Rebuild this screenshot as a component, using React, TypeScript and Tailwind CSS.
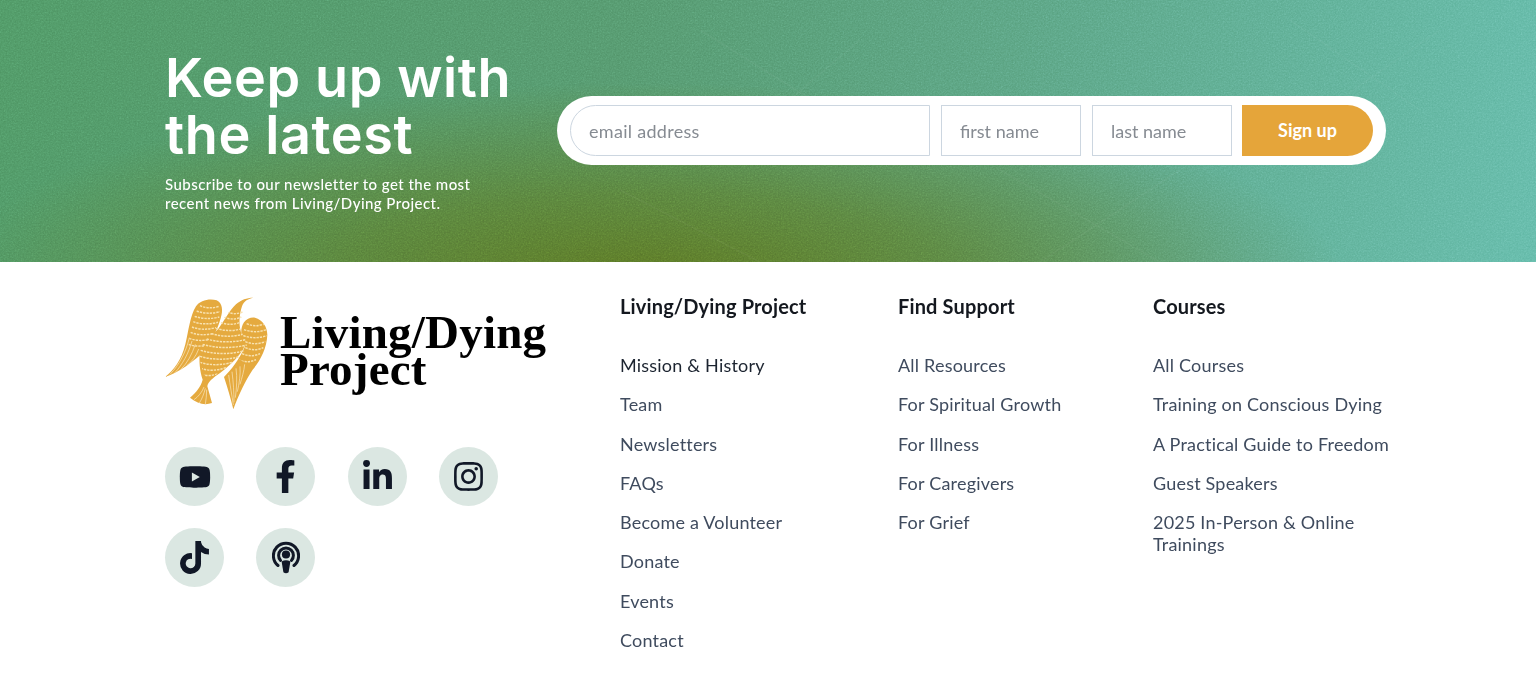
import React from 'react';
import { FaFacebookF, FaInstagram, FaLinkedinIn, FaTiktok, FaYoutube } from 'react-icons/fa';

const columns = [
  {
    title: 'Living/Dying Project',
    width: 'w-[278px]',
    links: ['Mission & History', 'Team', 'Newsletters', 'FAQs', 'Become a Volunteer', 'Donate', 'Events', 'Contact'],
  },
  {
    title: 'Find Support',
    width: 'w-[255px]',
    links: ['All Resources', 'For Spiritual Growth', 'For Illness', 'For Caregivers', 'For Grief'],
  },
  {
    title: 'Courses',
    width: 'w-[250px]',
    links: ['All Courses', 'Training on Conscious Dying', 'A Practical Guide to Freedom', 'Guest Speakers', '2025 In-Person & Online Trainings'],
  },
];

const PodcastIcon = ({ className }: { className?: string }) => (
  <svg viewBox="0 0 28 33" className={className} fill="none" stroke="currentColor" strokeLinecap="round">
    <path d="M6 24.5A12.6 12.6 0 1 1 22 24.5" strokeWidth="3" />
    <path d="M8.6 19.5A7.4 7.4 0 1 1 19.4 19.5" strokeWidth="3" />
    <circle cx="14" cy="13.5" r="4.1" fill="currentColor" stroke="none" />
    <path d="M9.6 20.4Q14 18.2 18.4 20.4L16.6 31.2Q14 33.4 11.4 31.2Z" fill="currentColor" stroke="none" />
  </svg>
);

const socials = [
  { Icon: FaYoutube, size: 'w-[32px] h-[32px]' },
  { Icon: FaFacebookF, size: 'w-[33px] h-[33px]' },
  { Icon: FaLinkedinIn, size: 'w-[33px] h-[33px]' },
  { Icon: FaInstagram, size: 'w-[33px] h-[33px]' },
  { Icon: FaTiktok, size: 'w-[33px] h-[33px]' },
  { Icon: PodcastIcon, size: 'w-[28px] h-[33px]' },
];

const Bird = () => (
  <svg viewBox="45 45 315 345" className="w-[105px] h-[115px] shrink-0">
    <defs>
      <clipPath id="bird-stripes">
        <path d="M118 165L130 90C140 65 165 55 200 58C217 68 218 90 205 140C222 105 250 72 284 58L292 72C276 105 268 130 272 150C280 120 300 110 318 110C345 125 356 150 350 175C344 205 330 235 310 260L262 232L230 262L168 300L152 250L148 205L112 215Z" />
      </clipPath>
    </defs>
    <g fill="#e5aa3f">
      <path d="M45 288C72 268 94 238 106 190C116 148 120 105 138 76C150 58 178 52 200 58C217 66 220 88 212 112C204 142 188 172 168 205C150 225 130 240 108 256C88 270 66 282 45 288Z" />
      <path d="M310 50C292 54 282 60 276 76C268 100 266 128 272 150C278 172 290 188 278 208C262 232 232 262 196 286C184 296 174 304 172 316L186 366C164 374 142 368 120 350C138 334 152 318 158 296C150 272 146 240 150 214C158 186 176 170 204 145C224 118 238 88 258 70C274 56 290 50 310 50Z" />
      <path d="M315 110C338 116 352 138 352 162C350 204 330 240 308 266C288 296 266 340 250 385C242 352 232 318 222 288C242 268 268 236 284 198C274 172 268 146 282 124C290 114 302 108 315 110Z" />
    </g>
    <g clipPath="url(#bird-stripes)" fill="none" stroke="#f8e2b0" strokeWidth="4.4" strokeDasharray="7 3">
      <path d="M150 74Q175 86 208 76" />
      <path d="M140 90Q172 102 210 92" />
      <path d="M134 106Q168 118 208 108" />
      <path d="M130 122Q160 134 204 124" />
      <path d="M126 138Q156 150 198 140" />
      <path d="M122 154Q150 166 188 158" />
      <path d="M118 172Q142 182 176 176" />
      <path d="M116 190Q134 198 162 194" />
      <path d="M232 92Q252 104 280 92" />
      <path d="M222 108Q248 120 274 108" />
      <path d="M212 124Q242 136 270 124" />
      <path d="M198 142Q236 154 272 144" />
      <path d="M184 158Q232 172 278 160" />
      <path d="M170 174Q226 190 286 176" />
      <path d="M158 190Q222 208 290 192" />
      <path d="M152 208Q212 226 282 210" />
      <path d="M150 226Q204 242 266 228" />
      <path d="M150 244Q194 258 248 244" />
      <path d="M152 262Q186 274 228 260" />
      <path d="M156 280Q178 288 204 278" />
      <path d="M290 128Q316 140 346 128" />
      <path d="M282 146Q316 158 350 146" />
      <path d="M280 164Q316 176 350 164" />
      <path d="M286 182Q316 194 346 182" />
      <path d="M286 200Q314 212 340 200" />
      <path d="M276 218Q304 230 330 218" />
      <path d="M264 236Q292 248 318 236" />
    </g>
    <g fill="none" stroke="#f8e4b8" strokeWidth="2.2">
      <path d="M118 170C108 212 88 252 60 280" />
      <path d="M126 180C116 216 98 250 74 276" />
      <path d="M136 190C126 220 112 246 92 266" />
      <path d="M146 204C138 226 126 242 110 254" />
      <path d="M162 318C156 334 144 348 132 356" />
      <path d="M166 322C162 338 156 354 148 366" />
      <path d="M170 326C170 342 168 356 166 370" />
      <path d="M236 282C240 312 246 344 250 372" />
      <path d="M246 272C250 304 252 334 252 364" />
      <path d="M258 262C262 290 260 320 256 350" />
      <path d="M270 256C272 280 268 306 262 332" />
      <path d="M284 250C282 270 276 290 270 310" />
    </g>
  </svg>
);

export default function App() {
  return (
    <div className="w-full min-h-[684px] bg-white font-['Lato',sans-serif]">
      <section className="relative h-[262px] overflow-hidden pl-[165px] flex items-start bg-[radial-gradient(ellipse_700px_200px_at_42%_108%,#597322_0%,rgba(89,118,40,0.7)_45%,rgba(89,118,40,0)_100%),linear-gradient(100deg,#4d9462_0%,#52946a_40%,#58a07e_65%,#61b8a6_100%)]">
        <svg className="absolute inset-0 w-full h-full opacity-40 mix-blend-overlay pointer-events-none" aria-hidden="true">
          <filter id="grain">
            <feTurbulence type="fractalNoise" baseFrequency="0.65" numOctaves="2" />
            <feColorMatrix type="saturate" values="0" />
          </filter>
          <rect width="100%" height="100%" filter="url(#grain)" />
        </svg>
        <svg className="absolute inset-0 w-full h-full pointer-events-none" aria-hidden="true" fill="none" stroke="#ffffff" strokeOpacity="0.04" strokeWidth="1.5">
          <path d="M700 30L860 130M860 40L730 150M1000 170L1160 262M1180 170L1040 262M1290 20L1420 110M1440 30L1310 120M620 190L760 262" />
        </svg>
        <div className="relative w-[392px] pt-[49px] text-white">
          <h2 className="text-[54px] leading-[57px] font-semibold tracking-[0.6px] font-['Inter',sans-serif]">
            Keep up with the latest
          </h2>
          <p className="mt-[12px] text-[15px] leading-[19px] font-medium tracking-[0.45px]">
            Subscribe to our newsletter to get the most
            <br />
            recent news from Living/Dying Project.
          </p>
        </div>
        <form className="relative mt-[96px] w-[829px] h-[69px] rounded-full bg-white pl-[13px] pr-[13px] flex items-center gap-[11px]">
          <input
            placeholder="email address"
            className="w-[360px] h-[51px] border border-[#ccd6e0] rounded-l-full pl-[18px] text-[18px] tracking-[0.3px] placeholder:text-[#868b92] outline-none"
          />
          <input
            placeholder="first name"
            className="w-[140px] h-[51px] border border-[#ccd6e0] pl-[18px] text-[18px] placeholder:text-[#868b92] outline-none"
          />
          <input
            placeholder="last name"
            className="w-[140px] h-[51px] border border-[#ccd6e0] pl-[18px] text-[18px] placeholder:text-[#868b92] outline-none"
          />
          <button type="button" className="w-[131px] h-[51px] -ml-[1px] rounded-r-full bg-[#e5a53a] text-white text-[18px] font-bold">
            Sign up
          </button>
        </form>
      </section>

      <footer className="pl-[165px] flex items-start">
        <div className="w-[455px] pt-[34px]">
          <div className="flex items-center">
            <Bird />
            <div className="font-['Liberation_Serif',serif] font-bold text-black text-[47px] tracking-[0.2px] ml-[10px] -mt-[5px]">
              <div className="leading-[37px]">Living/Dying</div>
              <div className="leading-[37px]">Project</div>
            </div>
          </div>
          <div className="mt-[36px] grid grid-cols-[repeat(4,59px)] gap-x-[32.4px] gap-y-[22px]">
            {socials.map(({ Icon, size }, i) => (
              <a key={i} className="w-[59px] h-[59px] rounded-full bg-[#dbe7e2] flex items-center justify-center text-[#111827]">
                <Icon className={size} />
              </a>
            ))}
          </div>
        </div>
        {columns.map((col) => (
          <div key={col.title} className={`${col.width} pt-[31px]`}>
            <h3 className="text-[20px] leading-[26px] font-bold tracking-[0.15px] text-[#14181f]">{col.title}</h3>
            <ul className="mt-[35px] flex flex-col gap-[17.3px]">
              {col.links.map((link) => (
                <li
                  key={link}
                  className={`text-[18px] leading-[22px] tracking-[0.2px] ${link === 'Mission & History' ? 'text-[#1c2430]' : 'text-[#3f4b5e]'}`}
                >
                  {link}
                </li>
              ))}
            </ul>
          </div>
        ))}
      </footer>
    </div>
  );
}
